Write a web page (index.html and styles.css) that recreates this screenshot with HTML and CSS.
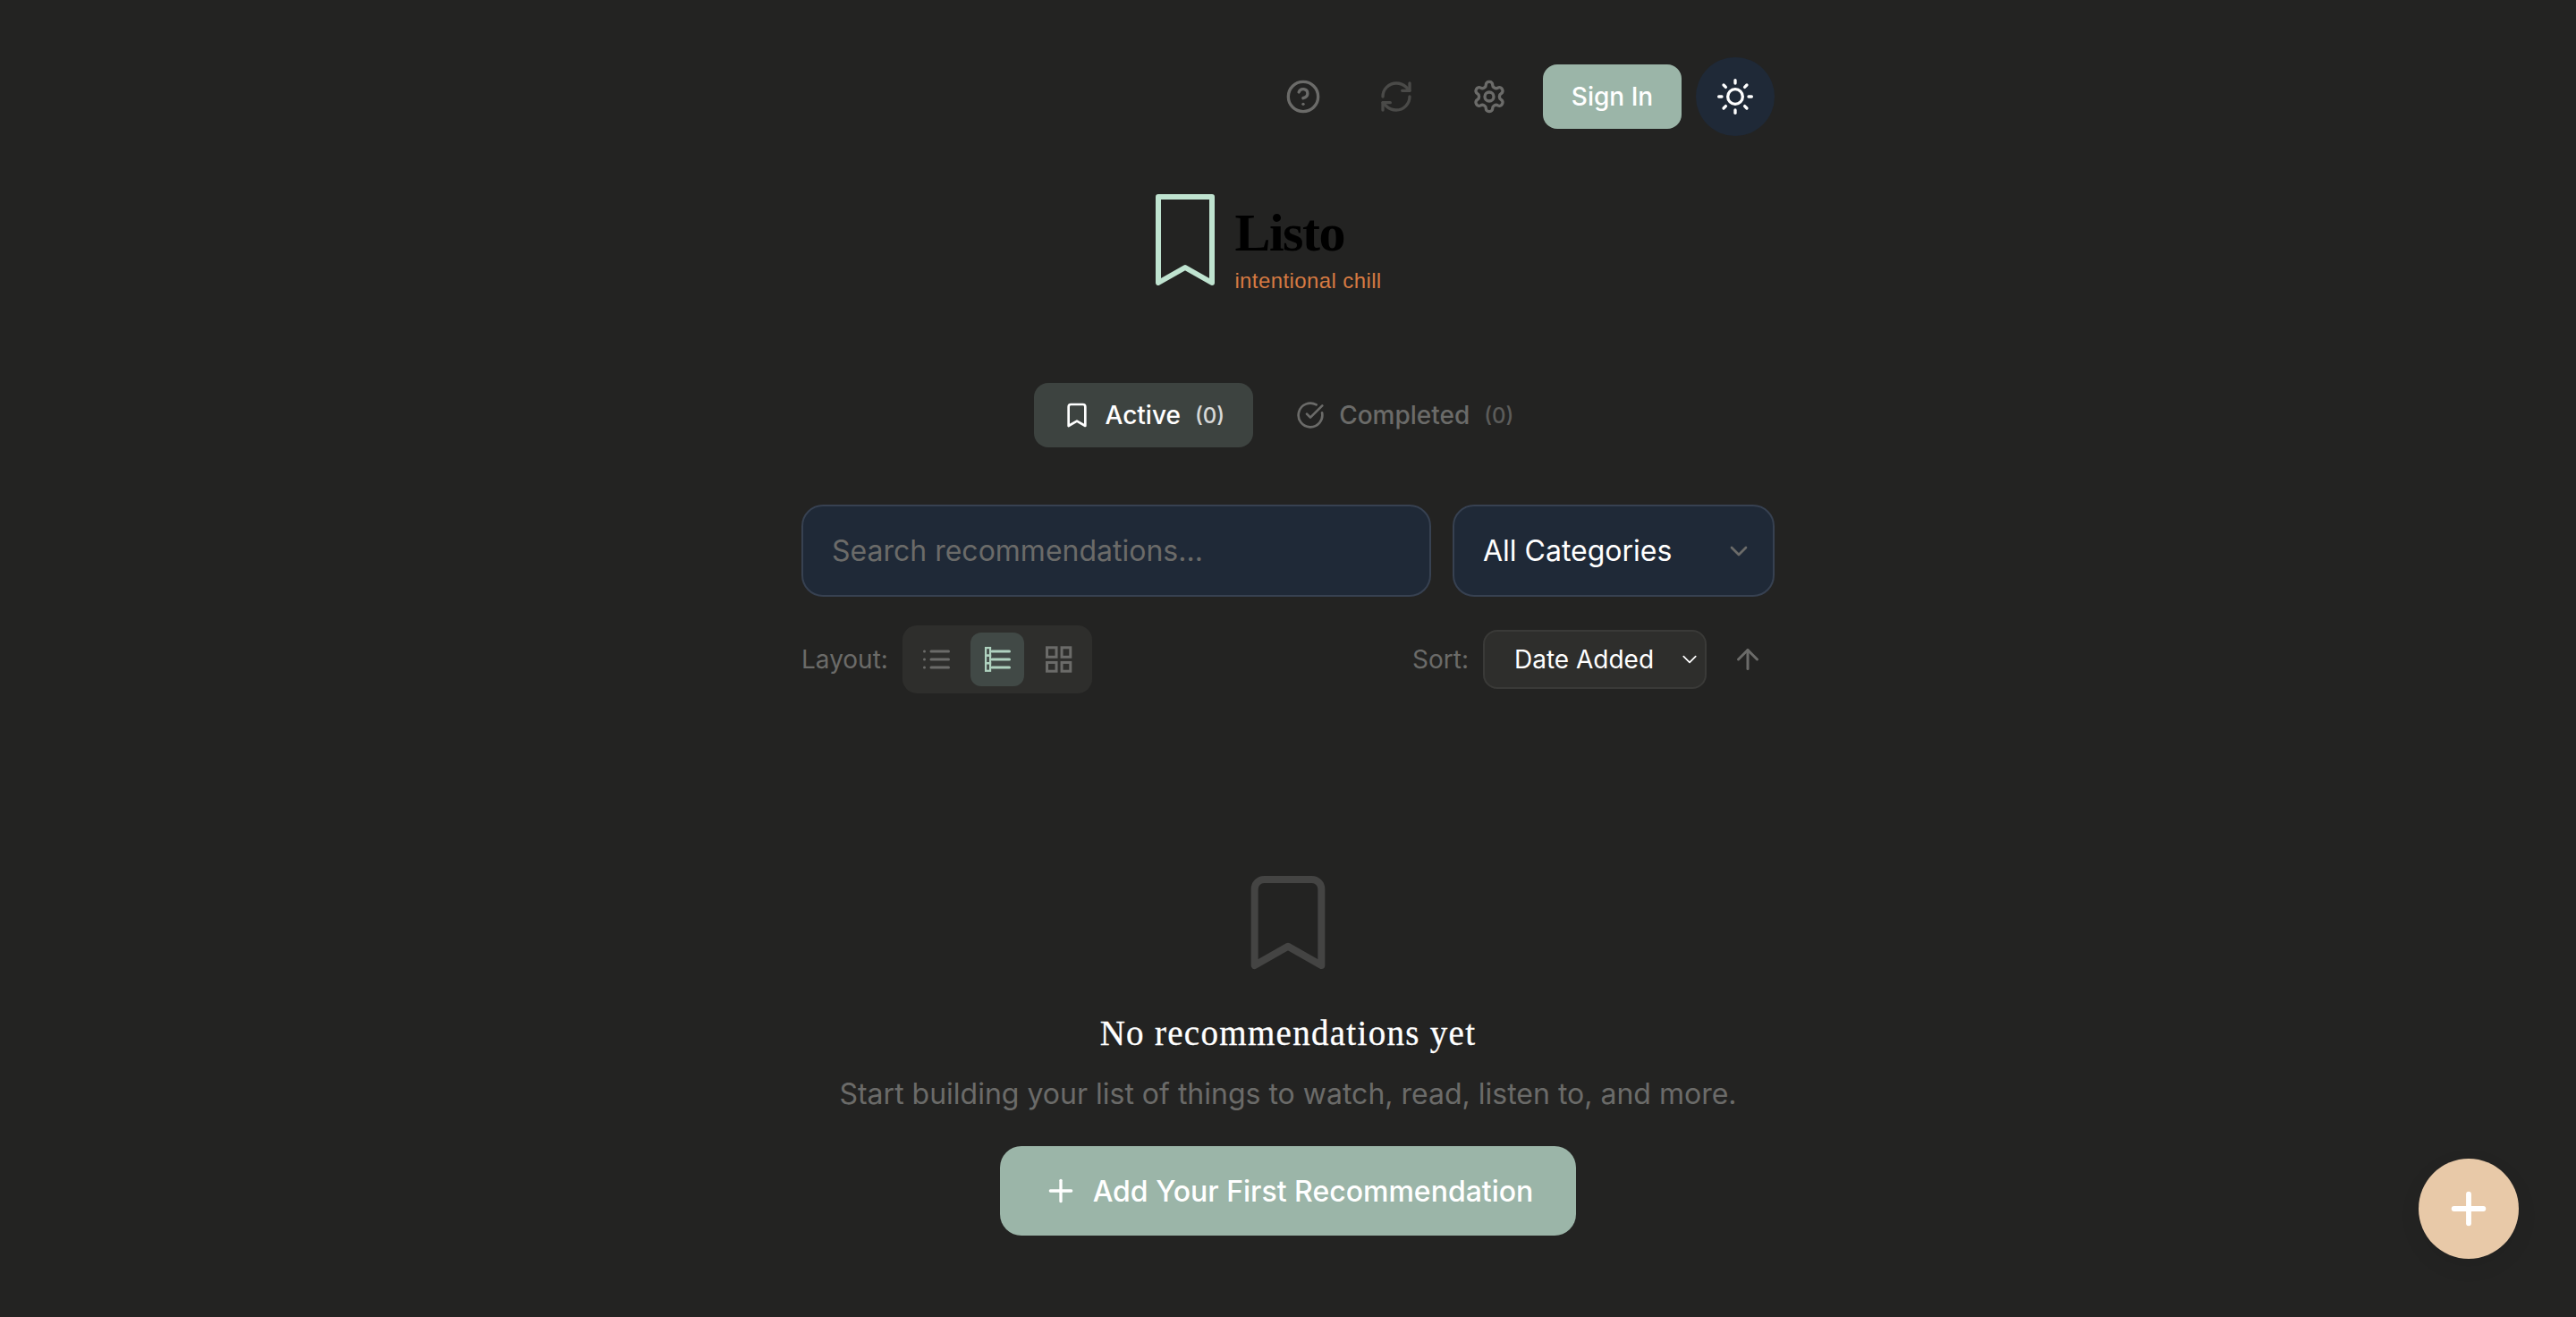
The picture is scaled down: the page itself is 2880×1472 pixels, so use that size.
FILE: index.html
```html
<!DOCTYPE html>
<html lang="en">
<head>
    <title>Listo</title>
    <meta charset="UTF-8">
    <meta name="viewport" content="width=device-width, initial-scale=1.0">
    <link rel="stylesheet" href="styles.css">
</head>
<body>
    <main class="container">
        <header class="topbar">
            <button class="icon-btn" aria-label="Help">
                <svg class="icon-md" viewBox="0 0 24 24"><circle cx="12" cy="12" r="10"/><path d="M9.09 9a3 3 0 0 1 5.83 1c0 2-3 3-3 3"/><path d="M12 17h.01"/></svg>
            </button>
            <button class="icon-btn dim" aria-label="Sync">
                <svg class="icon-md" viewBox="0 0 24 24"><path d="M3 12a9 9 0 0 1 9-9 9.75 9.75 0 0 1 6.74 2.74L21 8"/><path d="M21 3v5h-5"/><path d="M21 12a9 9 0 0 1-9 9 9.75 9.75 0 0 1-6.74-2.74L3 16"/><path d="M8 16H3v5"/></svg>
            </button>
            <button class="icon-btn" aria-label="Settings">
                <svg class="icon-md" viewBox="0 0 24 24"><path d="M12.22 2h-.44a2 2 0 0 0-2 2v.18a2 2 0 0 1-1 1.73l-.43.25a2 2 0 0 1-2 0l-.15-.08a2 2 0 0 0-2.73.73l-.22.38a2 2 0 0 0 .73 2.73l.15.1a2 2 0 0 1 1 1.72v.51a2 2 0 0 1-1 1.74l-.15.09a2 2 0 0 0-.73 2.73l.22.38a2 2 0 0 0 2.73.73l.15-.08a2 2 0 0 1 2 0l.43.25a2 2 0 0 1 1 1.73V20a2 2 0 0 0 2 2h.44a2 2 0 0 0 2-2v-.18a2 2 0 0 1 1-1.73l.43-.25a2 2 0 0 1 2 0l.15.08a2 2 0 0 0 2.73-.73l.22-.39a2 2 0 0 0-.73-2.73l-.15-.08a2 2 0 0 1-1-1.74v-.5a2 2 0 0 1 1-1.74l.15-.09a2 2 0 0 0 .73-2.73l-.22-.38a2 2 0 0 0-2.73-.73l-.15.08a2 2 0 0 1-2 0l-.43-.25a2 2 0 0 1-1-1.73V4a2 2 0 0 0-2-2z"/><circle cx="12" cy="12" r="3"/></svg>
            </button>
            <button class="signin">Sign In</button>
            <button class="theme-btn" aria-label="Theme">
                <svg class="icon-md" viewBox="0 0 24 24"><circle cx="12" cy="12" r="5"/><path d="M12 1v2"/><path d="M12 21v2"/><path d="m4.22 4.22 1.42 1.42"/><path d="m18.36 18.36 1.42 1.42"/><path d="M1 12h2"/><path d="M21 12h2"/><path d="m4.22 19.78 1.42-1.42"/><path d="m18.36 5.64 1.42-1.42"/></svg>
            </button>
        </header>

        <div class="logo">
            <svg class="logo-mark" viewBox="0 0 66 102"><path d="M3 3H63V99L33 82L3 99Z"/></svg>
            <div class="logo-text">
                <h1>Listo</h1>
                <p>intentional chill</p>
            </div>
        </div>

        <nav class="tabs">
            <a class="tab active">
                <svg class="icon-sm" viewBox="0 0 24 24"><path d="m19 21-7-4-7 4V5a2 2 0 0 1 2-2h10a2 2 0 0 1 2 2v16z"/></svg>
                <span>Active</span>
                <span class="count">(0)</span>
            </a>
            <a class="tab">
                <svg class="icon-sm" viewBox="0 0 24 24"><path d="M21.801 10A10 10 0 1 1 17 3.335"/><path d="m9 11 3 3L22 4"/></svg>
                <span>Completed</span>
                <span class="count">(0)</span>
            </a>
        </nav>

        <div class="filters">
            <input class="search" type="text" placeholder="Search recommendations...">
            <select class="category">
                <option>All Categories</option>
            </select>
        </div>

        <div class="toolbar">
            <div class="toolbar-group">
                <span class="toolbar-label">Layout:</span>
                <div class="layouts">
                    <button class="layout-btn" aria-label="Compact">
                        <svg class="icon-lay" viewBox="0 0 24 24"><path d="M3 6h.01"/><path d="M3 12h.01"/><path d="M3 18h.01"/><path d="M8 6h13"/><path d="M8 12h13"/><path d="M8 18h13"/></svg>
                    </button>
                    <button class="layout-btn active" aria-label="List">
                        <svg class="icon-lay" viewBox="0 0 24 24"><rect class="thin" x="3.4" y="3.4" width="3.3" height="5.7"/><rect class="thin" x="3.4" y="9.1" width="3.3" height="5.7"/><rect class="thin" x="3.4" y="14.8" width="3.3" height="5.7"/><path d="M8 6h13"/><path d="M8 12h13"/><path d="M8 18h13"/></svg>
                    </button>
                    <button class="layout-btn grid" aria-label="Grid">
                        <svg class="icon-lay" viewBox="0 0 24 24"><rect x="3.7" y="3.2" width="7" height="7"/><rect x="14.7" y="3.2" width="6.5" height="7"/><rect x="3.7" y="14.3" width="7" height="6.5"/><rect x="14.7" y="14.3" width="6.5" height="6.5"/></svg>
                    </button>
                </div>
            </div>
            <div class="toolbar-group">
                <span class="toolbar-label">Sort:</span>
                <select class="sort">
                    <option>Date Added</option>
                </select>
                <button class="sort-dir" aria-label="Sort direction">
                    <svg class="icon-lay" viewBox="0 0 24 24"><path d="m5 12 7-7 7 7"/><path d="M12 19V5"/></svg>
                </button>
            </div>
        </div>

        <section class="empty">
            <svg class="empty-icon" viewBox="0 0 24 24"><path d="m19 21-7-4-7 4V5a2 2 0 0 1 2-2h10a2 2 0 0 1 2 2v16z"/></svg>
            <h2>No recommendations yet</h2>
            <p>Start building your list of things to watch, read, listen to, and more.</p>
            <button class="add-first">
                <svg class="icon-md" viewBox="0 0 24 24"><path d="M5 12h14"/><path d="M12 5v14"/></svg>
                Add Your First Recommendation
            </button>
        </section>
    </main>

    <button class="fab" aria-label="Add">
        <svg viewBox="0 0 24 24"><path d="M5 12h14"/><path d="M12 5v14"/></svg>
    </button>
</body>
</html>
```

FILE: styles.css
```css
* {
    box-sizing: border-box;
}

html, body {
    height: 100%;
}

body {
    margin: 0;
    background-color: #232322;
    color: #fff;
    font-family: Inter, "Noto Sans", sans-serif;
    overflow: hidden;
}

button {
    font-family: inherit;
    border: none;
    background: none;
    color: inherit;
    padding: 0;
    cursor: pointer;
}

svg {
    fill: none;
    stroke: currentColor;
    stroke-width: 2;
    stroke-linecap: round;
    stroke-linejoin: round;
    flex-shrink: 0;
}

.icon-md {
    width: 40px;
    height: 40px;
}

.icon-sm {
    width: 32px;
    height: 32px;
}

.icon-lay {
    width: 36px;
    height: 36px;
}

.container {
    width: 1088px;
    margin: 0 auto;
    padding-top: 64px;
}

/* barra superior */
.topbar {
    display: flex;
    justify-content: flex-end;
    align-items: center;
    gap: 16px;
}

.icon-btn {
    width: 88px;
    height: 88px;
    display: flex;
    align-items: center;
    justify-content: center;
    color: #6b6b69;
}

.icon-btn.dim {
    color: #4a4a48;
}

.signin {
    width: 155px;
    height: 72px;
    border-radius: 16px;
    background-color: #9bb5a8;
    font-size: 28px;
    font-weight: 500;
}

.theme-btn {
    width: 88px;
    height: 88px;
    border-radius: 50%;
    background-color: #1f2937;
    display: flex;
    align-items: center;
    justify-content: center;
}

/* logo */
.logo {
    display: flex;
    justify-content: center;
    align-items: flex-start;
    gap: 22px;
    margin-top: 65px;
    padding-right: 43px;
}

.logo-mark {
    width: 66px;
    height: 102px;
    color: #bfe3d0;
    stroke-width: 6;
}

.logo-text {
    padding-top: 13px;
}

.logo-text h1 {
    margin: 0;
    font-family: "Liberation Serif", serif;
    font-size: 60px;
    font-weight: 700;
    line-height: 60px;
    letter-spacing: -1.5px;
    color: #000;
}

.logo-text p {
    margin: 8px 0 0;
    font-family: "Liberation Sans", Arial, sans-serif;
    font-size: 24px;
    line-height: 32px;
    letter-spacing: 0.4px;
    color: #d67a42;
}

/* pestañas */
.tabs {
    display: flex;
    justify-content: center;
    gap: 16px;
    margin-top: 98px;
}

.tab {
    display: flex;
    align-items: center;
    gap: 16px;
    height: 72px;
    padding: 0 32px;
    border-radius: 16px;
    font-size: 28px;
    font-weight: 500;
    color: #6b6b69;
}

.tab.active {
    background-color: #3d4340;
    color: #fff;
}

.count {
    font-size: 24px;
    opacity: 0.8;
}

/* busqueda */
.filters {
    display: flex;
    gap: 24px;
    margin-top: 64px;
}

.search, .category {
    height: 103px;
    border: 2px solid #374151;
    border-radius: 24px;
    background-color: #1f2937;
    font-family: inherit;
    font-size: 32px;
    color: #fff;
    outline: none;
    padding: 0 32px;
}

.search {
    flex: 1;
    min-width: 0;
}

.search::placeholder {
    color: #6b6b69;
}

.category {
    width: 360px;
    appearance: none;
    background-image: url("data:image/svg+xml,%3Csvg xmlns='http://www.w3.org/2000/svg' viewBox='0 0 24 24' fill='none' stroke='%236b6b69' stroke-width='2' stroke-linecap='round' stroke-linejoin='round'%3E%3Cpath d='m6 9 6 6 6-6'/%3E%3C/svg%3E");
    background-repeat: no-repeat;
    background-position: right 22px center;
    background-size: 32px;
}

/* layout y orden */
.toolbar {
    display: flex;
    justify-content: space-between;
    align-items: center;
    margin-top: 32px;
}

.toolbar-group {
    display: flex;
    align-items: center;
    gap: 16px;
}

.toolbar-label {
    font-size: 28px;
    color: #6b6b69;
}

.layouts {
    display: flex;
    gap: 8px;
    padding: 8px;
    border-radius: 16px;
    background-color: #2e2e2c;
}

.layout-btn {
    width: 60px;
    height: 60px;
    border-radius: 12px;
    display: flex;
    align-items: center;
    justify-content: center;
    color: #6b6b69;
}

.layout-btn.active {
    background-color: #414946;
    color: #afd2bf;
}

.layout-btn .thin {
    stroke-width: 1.5;
    stroke-linejoin: miter;
}

.layout-btn.grid svg {
    stroke-linejoin: miter;
}

.sort {
    width: 250px;
    height: 66px;
    padding: 0 33px;
    border: 2px solid #3a3a38;
    border-radius: 16px;
    background-color: #2e2e2c;
    font-family: inherit;
    font-size: 28px;
    color: #fff;
    outline: none;
    appearance: none;
    background-image: url("data:image/svg+xml,%3Csvg xmlns='http://www.w3.org/2000/svg' viewBox='0 0 16 16' fill='none' stroke='%23fff' stroke-width='1.5' stroke-linecap='round' stroke-linejoin='round'%3E%3Cpath d='m2 5 6 6 6-6'/%3E%3C/svg%3E");
    background-repeat: no-repeat;
    background-position: right 8px center;
    background-size: 18px;
}

.sort-dir {
    width: 60px;
    height: 60px;
    display: flex;
    align-items: center;
    justify-content: center;
    color: #6b6b69;
}

/* estado vacio */
.empty {
    display: flex;
    flex-direction: column;
    align-items: center;
    margin-top: 192px;
}

.empty-icon {
    width: 128px;
    height: 128px;
    color: #444443;
    stroke-width: 1.5;
}

.empty h2 {
    margin: 32px 0 0;
    font-family: "Liberation Serif", serif;
    font-size: 39px;
    font-weight: 400;
    line-height: 56px;
    letter-spacing: 1.3px;
    -webkit-text-stroke: 0.3px #fff;
}

.empty p {
    margin: 16px 0 0;
    font-size: 32px;
    line-height: 48px;
    color: #6b6b69;
}

.add-first {
    display: flex;
    align-items: center;
    gap: 16px;
    height: 100px;
    margin-top: 34px;
    padding: 0 48px;
    border-radius: 24px;
    background-color: #9bb5a8;
    font-size: 32px;
    font-weight: 500;
}

/* boton flotante */
.fab {
    position: fixed;
    right: 64px;
    bottom: 65px;
    width: 112px;
    height: 112px;
    border-radius: 50%;
    background-color: #e8c9a8;
    display: flex;
    align-items: center;
    justify-content: center;
    box-shadow: 0 8px 24px rgba(0,0,0,0.07);
}

.fab svg {
    width: 56px;
    height: 56px;
    stroke-width: 2.5;
}
```
